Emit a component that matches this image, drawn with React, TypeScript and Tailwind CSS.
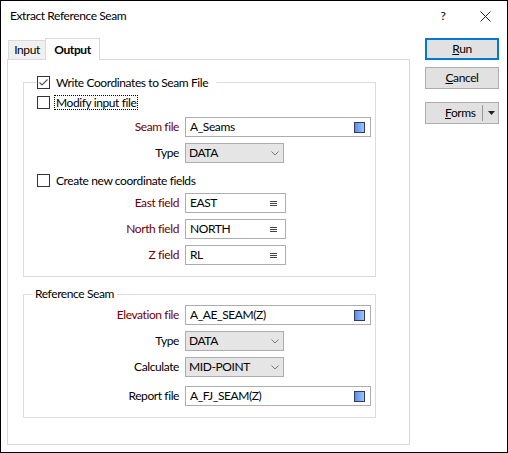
import type { ReactNode } from 'react';

// Windows-style "Extract Reference Seam" dialog, Output tab.
const FONT = 'Lato, "Noto Sans", "Liberation Sans", sans-serif';

function CheckBox({ checked = false }: { checked?: boolean }) {
  return (
    <span className="flex h-[13px] w-[13px] shrink-0 items-center justify-center border border-[#333] bg-white">
      {checked && (
        <svg width="11" height="11" viewBox="0 0 11 11">
          <polyline
            points="1.5,5.5 4,8 9.5,2.5"
            fill="none"
            stroke="#555"
            strokeWidth="1.2"
          />
        </svg>
      )}
    </span>
  );
}

function FileIcon() {
  return (
    <span className="h-[11px] w-[11px] border border-[#2e3d5c] bg-gradient-to-r from-[#5a8cee] to-[#a6c2f6]" />
  );
}

function ListIcon() {
  return (
    <svg width="7" height="7" viewBox="0 0 7 7">
      <path d="M0 1.5h7M0 3.5h7M0 5.5h7" stroke="#444" strokeWidth="1" />
    </svg>
  );
}

function Chevron() {
  return (
    <svg width="8" height="5" viewBox="0 0 8 5">
      <polyline points="0.5,0.5 4,4 7.5,0.5" fill="none" stroke="#777" strokeWidth="1" />
    </svg>
  );
}

function Row({
  label,
  red = false,
  mt,
  children,
}: {
  label: string;
  red?: boolean;
  mt: string;
  children: ReactNode;
}) {
  return (
    <div className={`flex h-[20px] items-center gap-[6px] ${mt}`}>
      <span
        className={`w-[155px] text-right ${red ? 'text-[#700000]' : 'text-black'}`}
      >
        {label}
      </span>
      {children}
    </div>
  );
}

function FileInput({ value }: { value: string }) {
  return (
    <div className="flex h-[20px] w-[186px] items-center justify-between border border-[#adadad] bg-white pl-[4px] pr-[5px]">
      <span>{value}</span>
      <FileIcon />
    </div>
  );
}

function FieldInput({ value }: { value: string }) {
  return (
    <div className="flex h-[20px] w-[101px] items-center justify-between border border-[#adadad] bg-white pl-[4px] pr-[8px]">
      <span>{value}</span>
      <ListIcon />
    </div>
  );
}

function Combo({ value }: { value: string }) {
  return (
    <div className="flex h-[20px] w-[99px] items-center justify-between border border-[#adadad] bg-[#e5e5e5] pl-[3px] pr-[4px]">
      <span>{value}</span>
      <Chevron />
    </div>
  );
}

function Button({
  children,
  primary = false,
  mt,
}: {
  children: ReactNode;
  primary?: boolean;
  mt: string;
}) {
  return (
    <div
      className={`flex h-[22px] w-[74px] items-center justify-center bg-[#e1e1e1] ${mt} ${
        primary ? 'border-2 border-[#0078d7]' : 'border border-[#adadad]'
      }`}
    >
      {children}
    </div>
  );
}

export default function App() {
  return (
    <div
      className="h-[453px] w-[508px] border border-black bg-white text-[12px] leading-none tracking-[-0.4px] text-black"
      style={{ fontFamily: FONT }}
    >
      {/* title bar */}
      <div className="flex h-[30px] items-center pl-[9px]">
        <span className="flex-1">Extract Reference Seam</span>
        <span className="w-[20px] text-center">?</span>
        <svg width="11" height="11" viewBox="0 0 11 11" className="ml-[27px] mr-[16px]">
          <path d="M0.5 0.5L10.5 10.5M10.5 0.5L0.5 10.5" stroke="#222" strokeWidth="1" />
        </svg>
      </div>

      <div className="flex pl-[6px] pt-[7px]">
        {/* tab control */}
        <div className="w-[403px]">
          <div className="flex h-[21px] items-end pl-[1px]">
            <div className="flex h-[19px] w-[38px] items-center justify-center border border-b-0 border-[#d9d9d9] bg-[#f0f0f0]">
              Input
            </div>
            <div className="relative z-10 -mb-px -ml-px flex h-[22px] w-[55px] items-center justify-center border border-b-0 border-[#d9d9d9] bg-white font-bold">
              Output
            </div>
          </div>
          <div className="h-[386px] border border-[#d9d9d9] px-[15px]">
            {/* Write Coordinates group */}
            <div className="relative mt-[22px] w-[353px] border border-[#dcdcdc] pb-[11px]">
              <div className="absolute -top-[7px] left-[12px] flex items-center gap-[6px] bg-white pl-[1px] pr-[8px]">
                <CheckBox checked />
                <span>Write Coordinates to Seam File</span>
              </div>
              <div className="ml-[13px] mt-[12px] flex h-[15px] items-center gap-[4px]">
                <CheckBox />
                <span className="flex h-[15px] items-center border border-dotted border-black px-[1px]">
                  Modify input file
                </span>
              </div>
              <Row label="Seam file" red mt="mt-[7px]">
                <FileInput value="A_Seams" />
              </Row>
              <Row label="Type" mt="mt-[6px]">
                <Combo value="DATA" />
              </Row>
              <div className="ml-[13px] mt-[10px] flex h-[15px] items-center gap-[6px]">
                <CheckBox />
                <span>Create new coordinate fields</span>
              </div>
              <Row label="East field" red mt="mt-[5px]">
                <FieldInput value="EAST" />
              </Row>
              <Row label="North field" red mt="mt-[6px]">
                <FieldInput value="NORTH" />
              </Row>
              <Row label="Z field" red mt="mt-[6px]">
                <FieldInput value="RL" />
              </Row>
            </div>

            {/* Reference Seam group */}
            <div className="relative mt-[17px] w-[353px] border border-[#dcdcdc] pb-[11px]">
              <span className="absolute -top-[7px] left-[8px] bg-white px-[3px]">
                Reference Seam
              </span>
              <Row label="Elevation file" red mt="mt-[10px]">
                <FileInput value="A_AE_SEAM(Z)" />
              </Row>
              <Row label="Type" mt="mt-[6px]">
                <Combo value="DATA" />
              </Row>
              <Row label="Calculate" mt="mt-[6px]">
                <Combo value="MID-POINT" />
              </Row>
              <Row label="Report file" mt="mt-[9px]">
                <FileInput value="A_FJ_SEAM(Z)" />
              </Row>
            </div>
          </div>
        </div>

        {/* buttons */}
        <div className="ml-[15px] flex flex-col">
          <Button primary mt="mt-0">
            <span>
              <span className="underline">R</span>un
            </span>
          </Button>
          <Button mt="mt-[7px]">
            <span>
              <span className="underline">C</span>ancel
            </span>
          </Button>
          <Button mt="mt-[13px]">
            <div className="flex w-full items-center">
              <span className="ml-[19px] w-[36px]">
                <span className="underline">F</span>orms
              </span>
              <span className="ml-[1px] h-[16px] w-px bg-[#999]" />
              <svg width="7" height="4" viewBox="0 0 7 4" className="ml-[5px]">
                <polygon points="0,0 7,0 3.5,4" fill="#222" />
              </svg>
            </div>
          </Button>
        </div>
      </div>
    </div>
  );
}
